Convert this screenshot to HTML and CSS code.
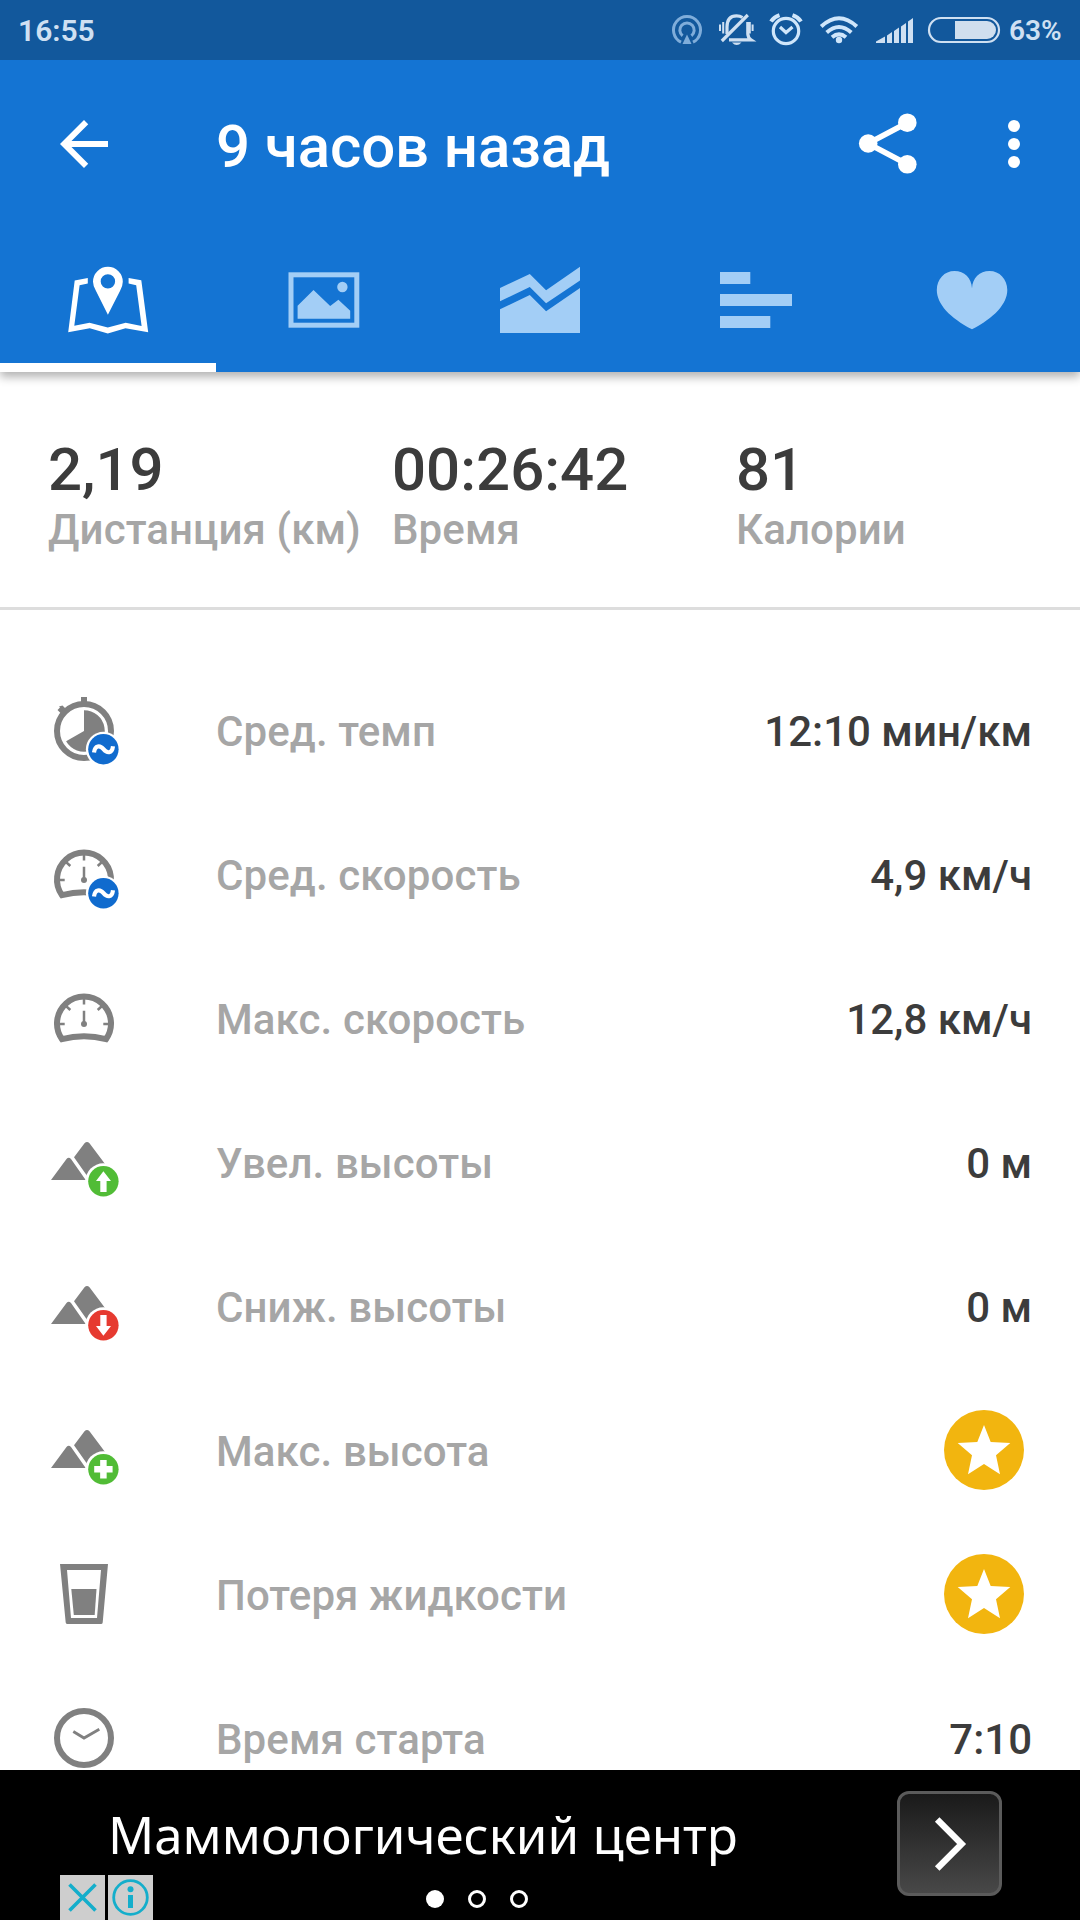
FILE: index.html
```html
<!DOCTYPE html>
<html lang="ru">
<head>
<meta charset="utf-8">
<title>9 часов назад</title>
<link rel="stylesheet" href="styles.css">
</head>
<body>
<div class="screen">
  <header class="header">
    <div class="status">
      <span class="clock">16:55</span>
      <div class="status-icons">
        <svg width="38" height="60" viewBox="20 0 38 60" fill="none" stroke="#7fadda" stroke-width="3">
          <path d="M31 42.200A13.500 13.500 0 1 1 43 42.200"/><path d="M32.600 35.800A7.200 7.200 0 1 1 41.400 35.800"/>
          <path d="M37 34.500L41.500 44H32.500Z" fill="#7fadda" stroke="none"/>
        </svg>
        <svg width="52" height="60" viewBox="58 0 52 60" fill="none" stroke="#cfe0f2" stroke-width="3.200">
          <path d="M77 34V27Q77 15.800 86.500 15.800Q90 15.800 92.500 17.500M97.800 22V34Q98.200 38 101 39.800H79"/>
          <path d="M71.800 41L97.800 15"/>
          <path d="M70 24.500V31M73.200 22V33.500M99.800 22V33.500M102.600 24.500V31" stroke-width="2"/>
          <path d="M82 42.500H91.500Q86.700 47.500 82 42.500Z" fill="#cfe0f2" stroke="none"/>
        </svg>
        <svg width="50" height="60" viewBox="110 0 50 60" fill="none" stroke="#cfe6fb" stroke-width="3.200">
          <circle cx="136" cy="31" r="12.700"/>
          <path d="M130 27L136 32.500L142.500 27"/>
          <path d="M121 21.500Q124 17 129.500 15.200M151 21.500Q148 17 142.500 15.200" stroke-width="4"/>
        </svg>
        <svg width="56" height="60" viewBox="160 0 56 60" fill="none" stroke="#cfe6fb" stroke-width="4">
          <path d="M171.200 26.500Q189 10 206.800 26.500M176.700 32.500Q189 21.500 201.300 32.500M182 37.300Q189 31.500 196 37.300"/>
          <circle cx="189" cy="40" r="3.200" fill="#cfe6fb" stroke="none"/>
        </svg>
        <svg width="54" height="60" viewBox="216 0 54 60" fill="#cfe0f2">
          <path d="M226 43V41.500L235 36.500V43ZM237 43V35.500L242 32V43ZM244 43V31L249 27.500V43ZM251 43V26.500L256 23V43ZM258 43V21.500L263 18V43Z"/>
        </svg>
        <svg width="86" height="60" viewBox="270 0 86 60">
          <rect x="279" y="18" width="70" height="24" rx="12" fill="none" stroke="#cfe0f2" stroke-width="2.200"/>
          <path d="M305 21H337A9 9 0 0 1 337 39H305Z" fill="#d0dfee"/>
        </svg>
        <span class="percent">63%</span>
      </div>
    </div>
    <div class="toolbar">
      <svg class="back" width="72" height="72" viewBox="0 0 24 24" fill="#fff"><path d="M20 11H7.830l5.590-5.590L12 4l-8 8 8 8 1.410-1.410L7.830 13H20z"/></svg>
      <h1 class="title">9 часов назад</h1>
      <svg width="72" height="72" viewBox="0 0 72 72" fill="#fff">
        <path d="M55.300 14.700L16 35.500L55.300 56.300" fill="none" stroke="#fff" stroke-width="5.600"/>
        <circle cx="16.200" cy="35.500" r="9.300"/><circle cx="55.300" cy="14.700" r="9.300"/><circle cx="55.300" cy="56.300" r="9.300"/>
      </svg>
      <svg class="more" width="36" height="72" viewBox="0 0 36 72" fill="#fff"><circle cx="18" cy="18" r="6"/><circle cx="18" cy="36" r="6"/><circle cx="18" cy="54" r="6"/></svg>
    </div>
    <nav class="tabs">
      <div class="tab tab-active">
        <svg width="216" height="144" viewBox="0 228 216 144" fill="#fff">
          <path d="M74.700 280.500L87.800 278V283.500L79.600 285.300L74.300 325.700L89.500 322.700L107.800 327.500L125.700 322.700L141.600 326L136.200 285.300L128.600 283.500V278L141.300 280.300L148.200 332.200L125.500 328.300L107.800 333.500L89.800 328.300L68.200 332.200Z"/>
          <path fill-rule="evenodd" d="M107.900 314.700L96 291Q93 286 93 281.700A14.900 14.900 0 0 1 122.800 281.700Q122.800 286 120 291ZM107.900 274.200A7.200 7.200 0 1 0 107.900 288.600A7.200 7.200 0 1 0 107.900 274.200Z"/>
        </svg>
      </div>
      <div class="tab">
        <svg width="216" height="144" viewBox="216 228 216 144" fill="#a3cef6">
          <rect x="291" y="274.800" width="65.800" height="50.400" fill="none" stroke="#a3cef6" stroke-width="5"/>
          <path d="M297.600 305.700L313.500 290L330.200 306L338.400 299.700L350.200 310.700V318.700H297.600Z"/>
          <circle cx="342.400" cy="287" r="5.200"/>
        </svg>
      </div>
      <div class="tab">
        <svg width="216" height="144" viewBox="432 228 216 144" fill="#a3cef6">
          <path d="M500 288L529.800 274L546.100 290.300L580 266.700V280.500L546.100 303.300L529.800 287L500 301.300Z"/>
          <path d="M500 309.300L529.800 295L546.100 311.300L580 288V333H500Z"/>
        </svg>
      </div>
      <div class="tab">
        <svg width="216" height="144" viewBox="648 228 216 144" fill="#a3cef6">
          <path d="M720 272H750.300V284H720ZM720 294H792V306H720ZM720 316H770.300V328H720Z"/>
        </svg>
      </div>
      <div class="tab">
        <svg width="216" height="144" viewBox="864 228 216 144" fill="#a3cef6">
          <path d="M972 329.300C950 318 936.800 304 936.800 290C936.800 279 944.500 271 954.500 271C964.500 271 971.500 278 972 288.300C972.500 278 979.500 271 989.500 271C999.500 271 1007.300 279 1007.300 290C1007.300 304 994 318 972 329.300Z"/>
        </svg>
      </div>
    </nav>
  </header>

  <section class="summary">
    <div class="stat"><div class="stat-value">2,19</div><div class="stat-label">Дистанция (км)</div></div>
    <div class="stat"><div class="stat-value">00:26:42</div><div class="stat-label">Время</div></div>
    <div class="stat"><div class="stat-value">81</div><div class="stat-label">Калории</div></div>
  </section>

  <main class="list">
    <div class="row">
      <svg class="icon" viewBox="0 0 72 72" fill="#808080">
        <circle cx="36" cy="35" r="27" fill="none" stroke="#808080" stroke-width="6"/>
        <path d="M33 1H39V7H33ZM9.500 14L12 11.500L11 10.500L14.500 9.500L19 14L14 18.500Z"/>
        <path d="M36 35V14.300A20.700 20.700 0 1 1 18.100 45.300Z"/>
        <circle cx="55.400" cy="53.300" r="17.500" fill="#fff"/><circle cx="55.400" cy="53.300" r="15.200" fill="#106bce"/>
        <path d="M46 56.500C47 49 52 49 55.500 53.200S64 58 65 50.300" fill="none" stroke="#fff" stroke-width="4.200"/>
      </svg>
      <span class="label">Сред. темп</span><span class="value">12:10 мин/км</span>
    </div>
    <div class="row">
      <svg class="icon" viewBox="0 0 72 72" fill="none" stroke="#808080">
        <path d="M14 55.200A27 27 0 1 1 58 55.200Q36 49.500 14 55.200Z" stroke-width="6"/>
        <path d="M36 14V20.500M36 26.700V40M11 40H16.700M55.300 40H61M18 22L22.300 26M54 22L49.700 26" stroke-width="2.500"/>
        <circle cx="36" cy="40" r="3" fill="#808080" stroke="none"/>
        <g stroke="none"><circle cx="55.400" cy="53.300" r="17.500" fill="#fff"/><circle cx="55.400" cy="53.300" r="15.200" fill="#106bce"/></g>
        <path d="M46 56.500C47 49 52 49 55.500 53.200S64 58 65 50.300" stroke="#fff" stroke-width="4.200"/>
      </svg>
      <span class="label">Сред. скорость</span><span class="value">4,9 км/ч</span>
    </div>
    <div class="row">
      <svg class="icon" viewBox="0 0 72 72" fill="none" stroke="#808080">
        <path d="M14 55.200A27 27 0 1 1 58 55.200Q36 49.500 14 55.200Z" stroke-width="6"/>
        <path d="M36 14V20.500M36 26.700V40M11 40H16.700M55.300 40H61M18 22L22.300 26M54 22L49.700 26" stroke-width="2.500"/>
        <circle cx="36" cy="40" r="3" fill="#808080" stroke="none"/>
      </svg>
      <span class="label">Макс. скорость</span><span class="value">12,8 км/ч</span>
    </div>
    <div class="row">
      <svg class="icon" viewBox="0 0 72 72" fill="#808080">
        <path d="M3 52L18.500 31Q20.700 28.500 23 31L37.700 52ZM26 29.300L36.500 15.300Q39 12.500 41.500 15.300L69 52H42Z"/>
        <circle cx="55.400" cy="53.300" r="18" fill="#fff"/><circle cx="55.400" cy="53.300" r="15.200" fill="#51bc36"/>
        <path d="M55.400 43.300L63 53H58.600V64H52.300V53H48Z" fill="#fff"/>
      </svg>
      <span class="label">Увел. высоты</span><span class="value">0 м</span>
    </div>
    <div class="row">
      <svg class="icon" viewBox="0 0 72 72" fill="#808080">
        <path d="M3 52L18.500 31Q20.700 28.500 23 31L37.700 52ZM26 29.300L36.500 15.300Q39 12.500 41.500 15.300L69 52H42Z"/>
        <circle cx="55.400" cy="53.300" r="18" fill="#fff"/><circle cx="55.400" cy="53.300" r="15.200" fill="#e63a30"/>
        <path d="M55.400 63.700L63 54H58.600V43H52.300V54H48Z" fill="#fff"/>
      </svg>
      <span class="label">Сниж. высоты</span><span class="value">0 м</span>
    </div>
    <div class="row">
      <svg class="icon" viewBox="0 0 72 72" fill="#808080">
        <path d="M3 52L18.500 31Q20.700 28.500 23 31L37.700 52ZM26 29.300L36.500 15.300Q39 12.500 41.500 15.300L69 52H42Z"/>
        <circle cx="55.400" cy="53.300" r="18" fill="#fff"/><circle cx="55.400" cy="53.300" r="15.200" fill="#51bc36"/>
        <path d="M46.200 53.300H64.600M55.400 44.100V62.500" fill="none" stroke="#fff" stroke-width="6.500"/>
      </svg>
      <span class="label">Макс. высота</span>
      <svg class="star" viewBox="0 0 80 80"><circle cx="40" cy="40" r="40" fill="#f2b50f"/><path d="M40 15L46.700 32L66.300 33L52 45.300L56 64.200L40 54L24 64.200L28 45.300L13.700 33L33.300 32Z" fill="#fff"/></svg>
    </div>
    <div class="row">
      <svg class="icon" viewBox="0 0 72 72" fill="#808080">
        <path fill-rule="evenodd" d="M12 4H60L54.700 62.500Q54.500 64 53 64H19.500Q18 64 17.700 62.500ZM19 10L23 58H49L53 10Z"/>
        <path d="M23.300 29H48.500L46.700 55H25.800Z"/>
      </svg>
      <span class="label">Потеря жидкости</span>
      <svg class="star" viewBox="0 0 80 80"><circle cx="40" cy="40" r="40" fill="#f2b50f"/><path d="M40 15L46.700 32L66.300 33L52 45.300L56 64.200L40 54L24 64.200L28 45.300L13.700 33L33.300 32Z" fill="#fff"/></svg>
    </div>
    <div class="row">
      <svg class="icon" viewBox="0 0 72 72" fill="none" stroke="#808080">
        <circle cx="36" cy="34" r="27" stroke-width="6"/><path d="M25.300 27.500L36 34L51.300 25.200" stroke-width="2.800"/>
      </svg>
      <span class="label">Время старта</span><span class="value">7:10</span>
    </div>
  </main>

  <footer class="ad">
    <div class="ad-main">
      <div class="ad-text">Маммологический центр</div>
      <div class="ad-bar">
        <svg class="ad-close" width="45" height="45" viewBox="0 0 45 45"><path d="M9.500 9.500L35.500 35.500M35.500 9.500L9.500 35.500" stroke="#14aecb" stroke-width="3.600"/></svg>
        <svg class="ad-info" width="45" height="45" viewBox="0 0 45 45" fill="#14aecb"><circle cx="22.500" cy="22.500" r="16.800" fill="none" stroke="#14aecb" stroke-width="2.800"/><circle cx="22.500" cy="14.300" r="3"/><path d="M20 20H25V33H20Z"/></svg>
        <svg class="pager" width="102" height="18" viewBox="0 0 102 18" fill="none" stroke="#fff" stroke-width="3"><circle cx="9" cy="9" r="9" fill="#fff" stroke="none"/><circle cx="51" cy="9" r="7.500"/><circle cx="93" cy="9" r="7.500"/></svg>
      </div>
    </div>
    <div class="ad-go"><svg width="40" height="60" viewBox="0 0 40 60" fill="none" stroke="#fff" stroke-width="6.400"><path d="M7.200 5.500L31.600 30L7.200 54.500"/></svg></div>
  </footer>
</div>
</body>
</html>
```
FILE: styles.css
```css
* { box-sizing: border-box; }
body { margin: 0; background: #fff; font-family: Roboto, "Noto Sans", sans-serif; }
svg { display: block; flex: none; }

.screen { width: 1080px; height: 1920px; display: flex; flex-direction: column; overflow: hidden; }

.header { flex: none; background: #1474d3; box-shadow: 0 5px 9px rgba(0, 0, 0, .3); }
.status { height: 60px; padding: 0 18px; background: #12589c; display: flex; justify-content: space-between; align-items: center; color: #cfe0f2; font-weight: 600; font-size: 30px; line-height: 60px; }
.clock { padding-top: 1px; }
.status-icons { display: flex; align-items: center; }
.percent { width: 56px; padding: 1px 0 0 3px; font-size: 28px; white-space: nowrap; }

.toolbar { height: 168px; padding: 0 48px; display: flex; align-items: center; }
.title { flex: 1; margin: 0; padding: 6px 0 0 96px; color: #fff; font-size: 60px; font-weight: 500; line-height: 72px; letter-spacing: -.1px; white-space: nowrap; }
.more { margin-left: 72px; }

.tabs { height: 144px; display: flex; }
.tab { width: 216px; height: 144px; }
.tab-active { box-shadow: inset 0 -9px #fff; }

.summary { flex: none; height: 238px; padding: 62px 0 0 48px; border-bottom: 3px solid #ddd; display: grid; grid-template-columns: repeat(3, 344px); white-space: nowrap; }
.stat-value { color: #3c3c3c; font-size: 60px; font-weight: 500; line-height: 72px; }
.stat-label { color: #a6a6a6; font-size: 42px; font-weight: 500; line-height: 48px; letter-spacing: .1px; }

.list { flex: 1; min-height: 0; padding-top: 50px; overflow: hidden; }
.row { height: 144px; padding: 0 48px; display: flex; align-items: center; font-size: 42px; font-weight: 500; }
.icon { width: 72px; height: 72px; margin-right: 96px; }
.label { flex: 1; padding-bottom: 2px; color: #a6a6a6; letter-spacing: .1px; }
.value { padding-bottom: 2px; color: #3c3c3c; }
.star { width: 80px; height: 80px; margin: 0 8px 4px 0; }

.ad { flex: none; height: 150px; padding-right: 78px; background: #000; display: flex; align-items: flex-start; justify-content: space-between; }
.ad-main { height: 150px; display: flex; flex-direction: column; justify-content: space-between; }
.ad-text { padding: 29px 0 0 108px; color: #fff; font-family: "Noto Sans", sans-serif; font-size: 51px; line-height: 70px; white-space: nowrap; }
.ad-bar { height: 45px; padding-left: 60px; display: flex; gap: 3px; align-items: center; }
.ad-close, .ad-info { background: #cecece; }
.pager { margin: 3px 0 0 270px; }
.ad-go { width: 105px; height: 105px; margin-top: 21px; border: 3px solid #5b5b5b; border-radius: 12px; background: linear-gradient(#1a1a1a, #484848); display: flex; align-items: center; justify-content: center; }
```
